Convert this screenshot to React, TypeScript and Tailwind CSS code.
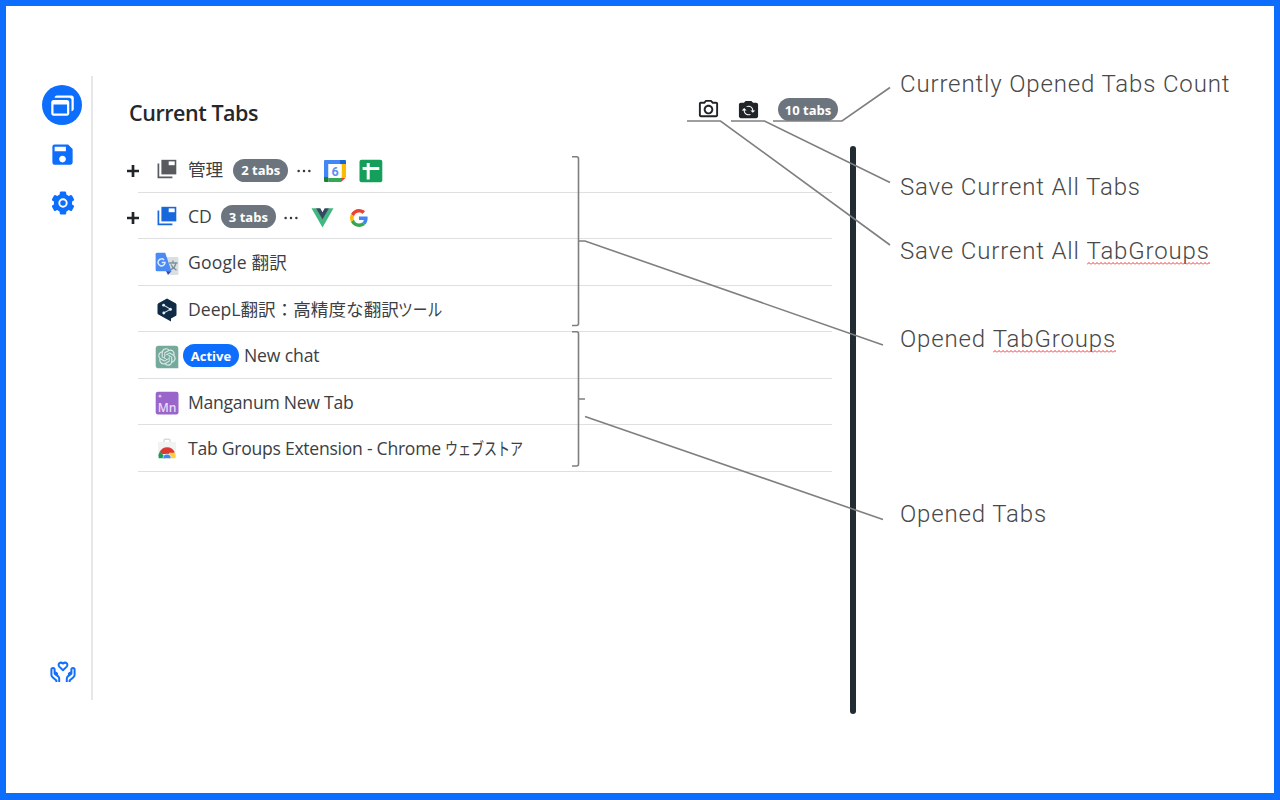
import type { ReactNode } from "react";
import { MdFlipCameraIos, MdOutlinePhotoCamera, MdSave } from "react-icons/md";
import { BiWindows } from "react-icons/bi";

function GearIcon({ className }: { className: string }) {
  return (
    <svg className={`h-6 w-6 ${className}`} viewBox="-12 -12 24 24">
      <g fill="#0d6efd">
        <circle r="9.2" />
        <rect x="-3.2" y="-11.5" width="6.4" height="23" rx="1.3" />
        <rect x="-3.2" y="-11.5" width="6.4" height="23" rx="1.3" transform="rotate(60)" />
        <rect x="-3.2" y="-11.5" width="6.4" height="23" rx="1.3" transform="rotate(120)" />
      </g>
      <circle r="3.700" fill="none" stroke="#fff" strokeWidth="1.9" />
    </svg>
  );
}

function HandsHeart() {
  return (
    <svg className="h-[24px] w-[26px]" viewBox="0 0 26 24" fill="none" stroke="#1270fa" strokeWidth="2" strokeLinecap="butt" strokeLinejoin="round">
      <path d="M13 10.2 9.3 6.6C7.2 4.4 10.2 1.1 13 3.6c2.8-2.5 5.8.8 3.7 3Z" />
      <path d="M6.4 22v-1.6l-3.8-3.2c-.8-.7-1.2-1.5-1.2-2.5V9.4c0-2 3.2-2 3.2 0v4.2l3.3 2.5c.9.7 1.3 1.6 1.3 2.7V22M4.6 13.6c1-1.6 3-.6 2.5 1.2l-.7 1.5" />
      <path d="M19.6 22v-1.6l3.8-3.2c.8-.7 1.2-1.5 1.2-2.5V9.4c0-2-3.2-2-3.2 0v4.2l-3.3 2.5c-.9.7-1.3 1.6-1.3 2.7V22M21.4 13.6c-1-1.6-3-.6-2.5 1.2l.7 1.5" />
    </svg>
  );
}

function GroupIcon({ color }: { color: string }) {
  return (
    <svg className="h-5 w-5" viewBox="0 0 20 20">
      <path d="M1.4 4.4v14h14" fill="none" stroke={color} strokeWidth="1.7" />
      <path d="M4.4.8h14.9v14.6H4.4Z" fill={color} />
      <path d="M11.7 2.4h6v3.8h-6Z" fill="#fff" />
    </svg>
  );
}

function Plus() {
  return (
    <svg className="h-3 w-3 shrink-0" viewBox="0 0 12 12" stroke="#212529" strokeWidth="2.7">
      <path d="M6 0v12M0 6h12" />
    </svg>
  );
}

function Dots() {
  return (
    <svg className="h-1 w-[14px]" viewBox="0 0 14 4" fill="#33383d">
      <circle cx="1.6" cy="2" r="1.25" />
      <circle cx="7" cy="2" r="1.25" />
      <circle cx="12.4" cy="2" r="1.25" />
    </svg>
  );
}

function CalendarIcon() {
  return (
    <svg className="h-6 w-6" viewBox="0 0 24 24">
      <path d="M2 1h15v4H5.5v13H1V2q0-1 1-1Z" fill="#4285f4" />
      <path d="M17 1h5q1 0 1 1v3.5h-6Z" fill="#1967d2" />
      <path d="M18.5 5H23v13h-4.5Z" fill="#fbbc04" />
      <path d="M5.5 19h12.5v4H5.5Z" fill="#34a853" />
      <path d="M1 18h4.5v5H2q-1 0-1-1Z" fill="#188038" />
      <path d="M18 18.5h5L18 23Z" fill="#ea4335" />
      <path d="M5.5 5h13v14h-13Z" fill="#fff" />
      <text x="12" y="16.5" textAnchor="middle" fontSize="12.5" fontWeight="700" fontFamily="Roboto, sans-serif" fill="#5b91ee">6</text>
    </svg>
  );
}

function SheetsIcon() {
  return (
    <svg className="h-6 w-6" viewBox="0 0 24 24">
      <rect x=".5" y=".7" width="22.8" height="22.6" rx="2" fill="#14a05b" />
      <path d="M9.2 4v16.6M3.6 9.5h16.7" stroke="#fff" strokeWidth="3" />
    </svg>
  );
}

function VueIcon() {
  return (
    <svg className="h-5 w-[23px]" viewBox="0 0 23 20">
      <path d="M.5.3h4.8l6.2 10.8L17.7.3h4.8L11.5 19.5Z" fill="#41b883" />
      <path d="M5 .3h4.3l2.2 3.9L13.7.3H18l-6.5 11.2Z" fill="#35495e" />
    </svg>
  );
}

function GoogleIcon() {
  return (
    <svg className="h-[18px] w-[18px]" viewBox="0 0 48 48">
      <path fill="#EA4335" d="M24 9.5c3.54 0 6.71 1.22 9.21 3.6l6.85-6.85C35.9 2.38 30.47 0 24 0 14.62 0 6.51 5.38 2.56 13.22l7.98 6.19C12.43 13.72 17.74 9.5 24 9.5z" />
      <path fill="#4285F4" d="M46.98 24.55c0-1.57-.15-3.09-.38-4.55H24v9.02h12.94c-.58 2.96-2.26 5.48-4.78 7.18l7.73 6c4.51-4.18 7.09-10.36 7.09-17.65z" />
      <path fill="#FBBC05" d="M10.53 28.59c-.48-1.45-.76-2.99-.76-4.59s.27-3.14.76-4.59l-7.98-6.19C.92 16.46 0 20.12 0 24s.92 7.54 2.56 10.78l7.97-6.19z" />
      <path fill="#34A853" d="M24 48c6.48 0 11.93-2.13 15.89-5.81l-7.73-6c-2.15 1.45-4.92 2.3-8.16 2.3-6.26 0-11.57-4.22-13.47-9.91l-7.98 6.19C6.51 42.62 14.62 48 24 48z" />
    </svg>
  );
}

function TranslateIcon() {
  return (
    <svg className="h-6 w-6" viewBox="0 0 24 24">
      <path d="M10 5h12q1.5 0 1.5 1.5v15q0 1.5-1.5 1.5H15Z" fill="#dcdfe1" />
      <path d="M14 11h8.5M18 8.5v2.5M21 11c-.8 3.5-3 6-6 7M16 12.5c1 2.5 3 4.5 5.5 5.7" stroke="#7c9199" strokeWidth="1.3" fill="none" />
      <path d="m11 19 5.5.2L13 23Z" fill="#3449b5" />
      <path d="M2 .8h8.2l6.3 18.5H2Q.6 19.3.6 17.8V2.3Q.6.8 2 .8Z" fill="#4a8af4" />
      <path d="M9 7.9a3.5 3.5 0 1 0 1 2.7H6.8" stroke="#dce9ff" strokeWidth="1.5" fill="none" />
    </svg>
  );
}

function DeepLIcon() {
  return (
    <svg className="h-6 w-6" viewBox="0 0 24 24">
      <path d="M12 .5 20.6 5.2q.9.5.9 1.5v9.8q0 1-.9 1.5L16 20.6v2.9l-4.5-2.6L3.4 16.4q-.9-.5-.9-1.5V6.700q0-1 .9-1.5Z" fill="#0f2b46" />
      <path d="m8.4 7 7.2 4.2L8.7 15" stroke="#c7d2dc" strokeWidth="1.1" fill="none" />
      <circle cx="8.6" cy="7.2" r="1.4" fill="#e8edf2" />
      <circle cx="15.4" cy="11.2" r="1.5" fill="#e8edf2" />
      <circle cx="8.8" cy="15" r="1.4" fill="#e8edf2" />
    </svg>
  );
}

function ChatIcon() {
  return (
    <svg className="h-6 w-6" viewBox="0 0 24 24">
      <path d="M3.5.7h17q2.8 0 2.8 2.8v19.7H3.5q-2.8 0-2.8-2.8V3.5Q.7.7 3.5.7Z" fill="#75a99c" />
      <g transform="translate(3.2 3.2) scale(.73)">
        <path fill="#d9e9e5" d="M22.2819 9.8211a5.9847 5.9847 0 0 0-.5157-4.9108 6.0462 6.0462 0 0 0-6.5098-2.9A6.0651 6.0651 0 0 0 4.9807 4.1818a5.9847 5.9847 0 0 0-3.9977 2.9 6.0462 6.0462 0 0 0 .7427 7.0966 5.98 5.98 0 0 0 .511 4.9107 6.051 6.051 0 0 0 6.5146 2.9001A5.9847 5.9847 0 0 0 13.2599 24a6.0557 6.0557 0 0 0 5.7718-4.2058 5.9894 5.9894 0 0 0 3.9977-2.9001 6.0557 6.0557 0 0 0-.7475-7.0729zm-9.022 12.6081a4.4755 4.4755 0 0 1-2.8764-1.0408l.1419-.0804 4.7783-2.7582a.7948.7948 0 0 0 .3927-.6813v-6.7369l2.02 1.1686a.071.071 0 0 1 .038.052v5.5826a4.504 4.504 0 0 1-4.4945 4.4944zm-9.6607-4.1254a4.4708 4.4708 0 0 1-.5346-3.0137l.142.0852 4.783 2.7582a.7712.7712 0 0 0 .7806 0l5.8428-3.3685v2.3324a.0804.0804 0 0 1-.0332.0615L9.74 19.9502a4.4992 4.4992 0 0 1-6.1408-1.6464zM2.3408 7.8956a4.485 4.485 0 0 1 2.3655-1.9728V11.6a.7664.7664 0 0 0 .3879.6765l5.8144 3.3543-2.0201 1.1685a.0757.0757 0 0 1-.071 0l-4.8303-2.7865A4.504 4.504 0 0 1 2.3408 7.872zm16.5963 3.8558L13.1038 8.364 15.1192 7.2a.0757.0757 0 0 1 .071 0l4.8303 2.7913a4.4944 4.4944 0 0 1-.6765 8.1042v-5.6772a.79.79 0 0 0-.407-.667zm2.0107-3.0231l-.142-.0852-4.7735-2.7818a.7759.7759 0 0 0-.7854 0L9.409 9.2297V6.8974a.0662.0662 0 0 1 .0284-.0615l4.8303-2.7866a4.4992 4.4992 0 0 1 6.6802 4.66zM8.3065 12.863l-2.02-1.1638a.0804.0804 0 0 1-.038-.0567V6.0742a4.4992 4.4992 0 0 1 7.3757-3.4537l-.142.0805L8.704 5.459a.7948.7948 0 0 0-.3927.6813zm1.0976-2.3654l2.602-1.4998 2.6069 1.4998v2.9994l-2.5974 1.4997-2.6067-1.4997Z" />
      </g>
    </svg>
  );
}

function ManganumIcon() {
  return (
    <svg className="h-6 w-6" viewBox="0 0 24 24">
      <rect x=".7" y=".7" width="22.8" height="22.8" rx="2.2" fill="#9965cb" />
      <circle cx="5" cy="5.2" r="1.4" fill="#d9c3ee" />
      <text x="12" y="21" textAnchor="middle" fontSize="12" fontWeight="600" fontFamily="Open Sans, sans-serif" fill="#e8daf5">Mn</text>
    </svg>
  );
}

function WebStoreIcon() {
  return (
    <svg className="h-6 w-6" viewBox="0 0 24 24">
      <path d="M9 4V2.3q0-1 1-1h4q1 0 1 1V4" stroke="#dadada" strokeWidth="1.5" fill="none" />
      <path d="M3 4h18v15.500H3Z" fill="#f1f2f2" />
      <path d="M4.6 14.1a8.3 8.3 0 0 1 15 0l-1 2H7Z" fill="#db3a32" />
      <path d="M14 14.800h5.9a8.3 8.3 0 0 1 .4 5.4H13Z" fill="#ffcd40" />
      <path d="M4.700 13.800a8.300 8.300 0 0 0-1 6.400H10l-1.500-3Z" fill="#179c52" />
      <path d="M7.600 20.200a4.400 4.400 0 0 1 8.800 0Z" fill="#f1f1f1" />
      <path d="M8.300 20.200a3.700 3.700 0 0 1 7.400 0Z" fill="#4285f4" />
    </svg>
  );
}

function Badge({ children, className }: { children: ReactNode; className: string }) {
  return (
    <span className={`flex h-[23px] shrink-0 items-center justify-center rounded-full pt-px text-[13px] leading-none font-bold text-white ${className}`}>
      {children}
    </span>
  );
}

function Row({ icon, plus, children }: { icon: ReactNode; plus?: boolean; children: ReactNode }) {
  return (
    <li className="flex h-[46.5px]">
      <div className="flex w-[11px] items-center pt-[4px]">{plus && <Plus />}</div>
      <div className="flex flex-1 items-center border-b border-[#dedfe0] pt-px">
        <div className="ml-[17px] flex w-6 shrink-0 justify-center">{icon}</div>
        {children}
      </div>
    </li>
  );
}

function Kana({ children, className }: { children: ReactNode; className: string }) {
  return <span className={`inline-block origin-left tracking-normal ${className}`}>{children}</span>;
}

function Misspelled({ children }: { children: ReactNode }) {
  return (
    <span className="relative inline-block">
      {children}
      <svg className="absolute bottom-[2px] left-0 h-[3px] w-full">
        <defs>
          <pattern id="wave" width="4" height="3" patternUnits="userSpaceOnUse">
            <path d="M0 2.5 2 .5 4 2.5" fill="none" stroke="#f52f2f" strokeWidth="1" />
          </pattern>
        </defs>
        <rect width="100%" height="3" fill="url(#wave)" />
      </svg>
    </span>
  );
}

const label = "h-8 text-[24px] leading-8 font-light tracking-[0.85px] whitespace-nowrap text-[#484848]";

export default function App() {
  return (
    <div className="relative flex h-[800px] w-[1280px] overflow-hidden border-6 border-b-7 border-[#0d6efd] bg-white font-['Open_Sans','Noto_Sans_CJK_JP',sans-serif] text-[#3c4044]">
      <aside className="mt-[70px] flex h-[624px] w-[87px] flex-col items-center border-r-2 border-[#e7e7e8] pl-[27px] text-[#0d6efd]">
        <div className="mt-[9px] flex h-10 w-10 items-center justify-center rounded-full bg-[#0d6efd] text-white">
          <BiWindows size={27} />
        </div>
        <MdSave size={27} className="mt-[16px] ml-px" />
        <GearIcon className="mt-[23px] ml-px" />
        <div className="mt-auto mb-[16px] ml-px"><HandsHeart /></div>
      </aside>

      <main className="ml-[34px] w-[705px] shrink-0 pt-[87px]">
        <header className="flex h-[53px] items-start">
          <h1 className="mt-[6px] ml-[2px] text-[21.5px] leading-7 font-semibold tracking-[-0.45px] text-[#24282c]">Current Tabs</h1>
          <div className="mt-[5px] ml-auto flex items-center text-[#212529]">
            <MdOutlinePhotoCamera size={23} className="mr-[17px]" />
            <MdFlipCameraIos size={23} className="mr-[18px]" />
            <Badge className="-mr-[6px] w-[60px] bg-[#6c757d]">10 tabs</Badge>
          </div>
        </header>
        <ul className="w-[705px] text-[17.6px]">
          <Row plus icon={<GroupIcon color="#575b60" />}>
            <span className="ml-[9px]">管理</span>
            <Badge className="mt-[2px] ml-[10px] w-[55px] bg-[#6c757d]">2 tabs</Badge>
            <span className="mt-1 ml-[9px]"><Dots /></span>
            <span className="mt-1 ml-[12px]"><CalendarIcon /></span>
            <span className="mt-1 ml-[12px]"><SheetsIcon /></span>
          </Row>
          <Row plus icon={<GroupIcon color="#1967dc" />}>
            <span className="ml-[9px]">CD</span>
            <Badge className="mt-[2px] ml-[9px] w-[55px] bg-[#6c757d]">3 tabs</Badge>
            <span className="mt-1 ml-[8px]"><Dots /></span>
            <span className="mt-1 ml-[13px]"><VueIcon /></span>
            <span className="mt-1 ml-[16px]"><GoogleIcon /></span>
          </Row>
          <Row icon={<span className="mt-[3px]"><TranslateIcon /></span>}>
            <span className="ml-[9px] tracking-[0.15px]">Google 翻訳</span>
          </Row>
          <Row icon={<span className="mt-[3px]"><DeepLIcon /></span>}>
            <span className="ml-[9px] whitespace-nowrap">DeepL翻訳：高精度な翻訳<Kana className="scale-x-[0.84] -translate-x-[1px]">ツール</Kana></span>
          </Row>
          <Row icon={<span className="mt-[3px]"><ChatIcon /></span>}>
            <Badge className="mt-px ml-[4px] w-[56px] bg-[#0d6efd]">Active</Badge>
            <span className="ml-[5px] tracking-[-0.15px]">New chat</span>
          </Row>
          <Row icon={<span className="mt-[3px]"><ManganumIcon /></span>}>
            <span className="ml-[9px] tracking-[-0.27px]">Manganum New Tab</span>
          </Row>
          <Row icon={<span className="mt-[3px]"><WebStoreIcon /></span>}>
            <span className="ml-[9px] tracking-[-0.27px] whitespace-nowrap">Tab Groups Extension - Chrome <Kana className="scale-x-[0.74]">ウェブストア</Kana></span>
          </Row>
        </ul>
      </main>

      <div className="mt-[140px] ml-[18px] h-[568px] w-[6px] shrink-0 rounded-full bg-[#212d32]" />

      <section className="ml-[44px] pt-[62px] font-['Roboto',sans-serif]">
        <p className={label}>Currently Opened Tabs Count</p>
        <p className={`${label} mt-[71px]`}>Save Current All Tabs</p>
        <p className={`${label} mt-[32px]`}>Save Current All <Misspelled>TabGroups</Misspelled></p>
        <p className={`${label} mt-[56px]`}>Opened <Misspelled>TabGroups</Misspelled></p>
        <p className={`${label} mt-[143px]`}>Opened Tabs</p>
      </section>

      <svg className="pointer-events-none absolute -top-[6px] -left-[6px] h-[800px] w-[1280px]" viewBox="0 0 1280 800" fill="none" stroke="#7f7f7f" strokeWidth="1.6">
        <path d="M773 121H842L890 87.5" />
        <path d="M731 121H764.5L890 182.5" />
        <path d="M687 121H720.5L890 245" />
        <path d="M572 156.7h4.5q2 0 2 2V323.5q0 2-2 2H572M578.5 241H585L883 345" />
        <path d="M572 331.7h4.5q2 0 2 2V464q0 2-2 2H572M578.5 399H585M585 416.5 883 519.5" />
      </svg>
    </div>
  );
}
